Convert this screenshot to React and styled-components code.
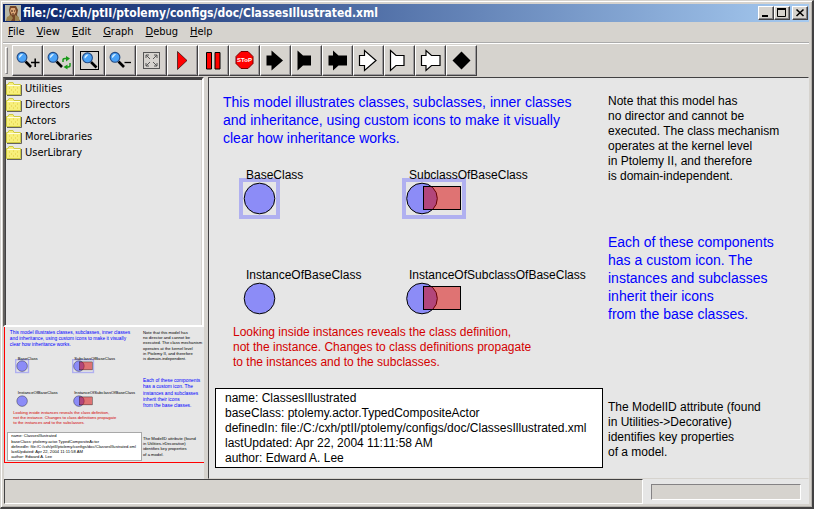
import React from "react";
import styled, { createGlobalStyle } from "styled-components";

const ui = '"DejaVu Sans Condensed", "DejaVu Sans", sans-serif';
const face = "#d6d3ce";
const pane = "#e6e6e6";

const GlobalStyle = createGlobalStyle`
  * { box-sizing: border-box; }
  body { margin: 0; background: ${face}; }
  button { font: inherit; color: inherit; padding: 0; margin: 0; }
  ul { list-style: none; margin: 0; padding: 0; }
`;

const Window = styled.div`
  min-height: 100vh;
  display: flex;
  flex-direction: column;
  background: ${face};
  border: solid;
  border-width: 1px 2px 2px 1px;
  border-color: ${face} #424142 #424142 ${face};
  box-shadow: inset 1px 1px 0 #fff, inset -1px -1px 0 #b5b2ad;
  padding: 3px 3px 3px 2px;
  font: 11px ${ui};
  color: #000;
`;

const TitleBar = styled.header`
  display: flex;
  align-items: center;
  height: 18px;
  flex: none;
  padding: 0 1px 0 2px;
  background: linear-gradient(90deg, #0a246a, #a6caf0);
`;

const Title = styled.h1`
  flex: 1;
  margin: 0 0 0 2px;
  color: #fff;
  font: bold 12px/18px ${ui};
  white-space: nowrap;
`;

const WindowButton = styled.button`
  width: 16px;
  height: 14px;
  margin-left: ${(p) => (p.$apart ? 2 : 0)}px;
  display: flex;
  background: ${face};
  border: 1px solid;
  border-color: #fff #424142 #424142 #fff;
  box-shadow: inset -1px -1px 0 #848284;
`;

const MenuBar = styled.nav`
  display: flex;
  gap: 12px;
  height: 22px;
  flex: none;
  padding: 0 5px;
  border-bottom: 2px groove #fff;
`;

const MenuItem = styled.button`
  border: 0;
  background: none;
  font: 11px/20px ${ui};
  &::first-letter { text-decoration: underline; }
`;

const ToolBar = styled.div`
  display: flex;
  align-items: flex-start;
  height: 33px;
  flex: none;
  padding: 1px 2px;
`;

const Grip = styled.span`
  width: 3px;
  height: 27px;
  margin: 2px 4px 0 0;
  border: 1px solid;
  border-color: #fff #848284 #848284 #fff;
`;

const ToolButton = styled.button`
  width: 31px;
  height: 31px;
  display: flex;
  background: ${face};
  border: 1px solid;
  border-color: #fff #424142 #424142 #fff;
  box-shadow: inset -1px -1px 0 #9c9a9c;
  svg { display: block; margin: -1px; overflow: visible; flex: none; }
`;

const Split = styled.main`
  flex: 1;
  display: grid;
  grid-template-columns: 201px 1fr;
  column-gap: 4px;
`;

const Side = styled.aside`
  display: grid;
  grid-template-rows: 250px 1fr;
  min-width: 0;
`;

const Tree = styled.ul`
  border: 2px solid;
  border-color: #424142 #fff #fff #63615f;
  box-shadow: inset 1px 1px 0 #424142, inset -1px 0 0 ${face};
  background: ${pane};
  && { padding: 2px 0 0 1px; }
`;

const Folder = styled.button`
  display: flex;
  align-items: center;
  gap: 3px;
  height: 16px;
  border: 0;
  background: none;
  font: 11px/16px ${ui};
`;

const Overview = styled.div`
  position: relative;
  overflow: hidden;
  background: ${pane};
  margin-left: 1px;
`;

const Graph = styled.section`
  position: relative;
  border: 1px solid;
  border-color: #424142 ${pane} ${face} #424142;
  background: ${pane};
  min-width: 0;
  overflow: hidden;
`;

const Note = styled.p`
  position: absolute;
  left: ${(p) => p.$x}px;
  top: ${(p) => p.$y}px;
  margin: 0;
  white-space: pre;
  color: ${(p) => p.$color || "#000"};
  font: ${(p) => (p.$large ? "14px/18px" : "12px/15px")} "Liberation Sans", Arial, sans-serif;
`;

const ModelId = styled(Note)`
  border: 1px solid #000;
  background: #fff;
  padding: 2px 15px 1px 9px;
`;

const Miniature = styled.div`
  position: absolute;
  left: 0;
  top: -10px;
  zoom: 0.346;
  width: 600px;
  height: 402px;
  border: 3px solid #f00;
  ${ModelId} { border-color: #a8a8a8; }
`;

const Actor = styled.svg`
  position: absolute;
  left: ${(p) => p.$x}px;
  top: ${(p) => p.$y}px;
  overflow: visible;
`;

const StatusBar = styled.footer`
  display: grid;
  grid-template-columns: 1fr 166px;
  flex: none;
  height: 25px;
  background: ${pane};
  margin-left: 1px;
`;

const StatusText = styled.div`
  background: ${face};
  border: 1px solid;
  border-color: #424142 #fff #fff #424142;
`;

const Progress = styled.div`
  align-self: center;
  height: 16px;
  margin: 0 8px;
  background: ${face};
  border: 1px solid;
  border-color: #848284 #fff #fff #848284;
`;

const Icon = ({ children }) => (
  <svg width="31" height="31" viewBox="0 0 31 31" aria-hidden="true">{children}</svg>
);

const Lens = () => (
  <g>
    <path d="M13.5 16.5l5.5 5.5" stroke="#000" strokeWidth="2.6" />
    <circle cx="10" cy="12.3" r="4.9" fill="#4aa2f7" stroke="#214a84" strokeWidth="1.1" />
    <path d="M7 12.5a3.2 3.2 0 0 1 4-3.4L7.6 13z" fill="#d6efff" />
  </g>
);

const solid = { fill: "#000" };
const hollow = { fill: "#fff", stroke: "#000", strokeWidth: 1.2 };
const right = "M6.5 10.5h5v-5l11.5 10-11.5 10v-5h-5z";
const inward = "M6.5 5.5l5.5 5h8v10h-8l-5.5 5z";
const both = "M6.5 10.5h4.5v-5l5.5 5h8.5v10h-8.5l-5.5 5v-5h-4.5z";

const tools = [
  ["Zoom in", <><Lens /><path d="M19 17.5h8.5M23.2 13.5v8.5" stroke="#000" strokeWidth="1.5" /></>],
  ["Reset zoom", <><Lens /><g stroke="#189a18" strokeWidth="1.5" fill="none"><path d="M20 17v-2q0-1.5 2-1.5h2M27 18v2.5q0 1.5-2 1.5h-2" /></g><path d="M23 11l4 2.5-4 3zM24.5 19.5v5l-4-2.5z" fill="#189a18" /></>],
  ["Fit", <><rect x="6.5" y="6.5" width="18" height="18" fill="none" stroke="#000" /><g transform="translate(3.5 .5)"><Lens /></g></>],
  ["Zoom out", <><Lens /><path d="M19.5 17.5h6.5" stroke="#000" strokeWidth="1.3" /></>],
  ["Full screen", <g fill="none" stroke="#555"><rect x="7.5" y="7.5" width="16" height="16" /><path d="M10 13v-3h3M18 10h3v3M10 18v3h3M21 18v3h-3M10 10l4 4M21 10l-4 4M10 21l4-4M21 21l-4-4" /></g>],
  ["Run", <path d="M10.5 6.5v18l9.5-9z" fill="#f00" stroke="#000" strokeWidth=".6" />],
  ["Pause", <path d="M8.5 7.5h5v16.5h-5zM17 7.5h5v16.5h-5z" fill="#f00" stroke="#000" />],
  ["Stop", <><path d="M12 6.5h7l5 5v7l-5 5h-7l-5-5v-7z" fill="#f00" stroke="#700" /><text x="15.5" y="17" textAnchor="middle" fontSize="6" fontWeight="bold" fontFamily="Liberation Sans, sans-serif" fill="#fff">SToP</text></>],
  ["Input port", <path d={right} {...solid} />],
  ["Output port", <path d={inward} {...solid} />],
  ["Input/output port", <path d={both} {...solid} />],
  ["Input multiport", <path d={right} {...hollow} />],
  ["Output multiport", <path d={inward} {...hollow} />],
  ["Input/output multiport", <path d={both} {...hollow} />],
  ["New relation", <path d="M15.5 6.5l9 9-9 9-9-9z" {...solid} />],
];

const FolderIcon = () => (
  <svg width="16" height="14" viewBox="0 0 16 14" aria-hidden="true">
    <path d="M1 13.5h14.5V3" fill="none" stroke="#63615f" />
    <path d="M.5 12.5v-10h1.5l1-2h4l1 2h6.5v10z" fill="#f7ef7b" stroke="#ceca42" />
    <path d="M1.5 3.5h12.5" stroke="#fffde0" />
    <path d="M3 6h1M7 5h1M11 6h1M5 8h1M9 8h1M3 10h1M7 10h1M11 10h1" stroke="#e0c840" />
  </svg>
);

const BaseShape = ({ x, y, framed }) => (
  <Actor $x={x} $y={y} width="40" height="40" aria-hidden="true">
    {framed && <rect x="2" y="2" width="37" height="37" fill="none" stroke="#b0b0f0" strokeWidth="4" />}
    <circle cx="20.5" cy="20.5" r="15.3" fill="#8c8cf7" stroke="#000" />
  </Actor>
);

const SubShape = ({ x, y, framed }) => (
  <Actor $x={x} $y={y} width="64" height="40" aria-hidden="true">
    {framed && <rect x="2" y="2" width="60" height="37" fill="none" stroke="#b0b0f0" strokeWidth="4" />}
    <circle cx="20" cy="20.5" r="15.3" fill="#8c8cf7" stroke="#000" />
    <rect x="21.5" y="8.5" width="37" height="23" fill="#d80000" fillOpacity=".5" stroke="#000" />
  </Actor>
);

const Scene = () => (
  <>
    <Note $large $x={14} $y={15} $color="#00f">{`This model illustrates classes, subclasses, inner classes
and inheritance, using custom icons to make it visually
clear how inheritance works.`}</Note>
    <Note $x={399} $y={16}>{`Note that this model has
no director and cannot be
executed. The class mechanism
operates at the kernel level
in Ptolemy II, and therefore
is domain-independent.`}</Note>
    <BaseShape x={30} y={100} framed />
    <SubShape x={193} y={100} framed />
    <BaseShape x={30} y={200} />
    <SubShape x={193} y={200} />
    <Note $x={37} $y={90}>BaseClass</Note>
    <Note $x={200} $y={90}>SubclassOfBaseClass</Note>
    <Note $x={37} $y={190}>InstanceOfBaseClass</Note>
    <Note $x={200} $y={190}>InstanceOfSubclassOfBaseClass</Note>
    <Note $large $x={399} $y={155} $color="#00f">{`Each of these components
has a custom icon. The
instances and subclasses
inherit their icons
from the base classes.`}</Note>
    <Note $x={24} $y={247} $color="#d40000">{`Looking inside instances reveals the class definition,
not the instance. Changes to class definitions propagate
to the instances and to the subclasses.`}</Note>
    <ModelId $x={6} $y={310}>{`name: ClassesIllustrated
baseClass: ptolemy.actor.TypedCompositeActor
definedIn: file:/C:/cxh/ptII/ptolemy/configs/doc/ClassesIllustrated.xml
lastUpdated: Apr 22, 2004 11:11:58 AM
author: Edward A. Lee`}</ModelId>
    <Note $x={399} $y={322}>{`The ModelID attribute (found
in Utilities->Decorative)
identifies key properties
of a model.`}</Note>
  </>
);

export default function App() {
  return (
    <Window>
      <GlobalStyle />
      <TitleBar>
        <svg width="16" height="16" viewBox="0 0 16 16" aria-hidden="true">
          <path d="M0 0h16v16H0z" fill="#b8b8a8" />
          <path d="M5 1h6l2 4-1 5 3 6H1l4-6-1-5z" fill="#754526" />
          <path d="M6 3h4l1 4-2 3H7L5 6z" fill="#dda878" />
          <path d="M2 12l4-2 2 3-2 3H1zM10 10l4 2v4h-4z" fill="#9c8350" />
          <path d="M6 6h2M9 6h1M7 9h2" stroke="#3b1d10" />
        </svg>
        <Title>file:/C:/cxh/ptII/ptolemy/configs/doc/ClassesIllustrated.xml</Title>
        <WindowButton aria-label="Minimize"><svg width="14" height="12"><path d="M3 9h6" stroke="#000" strokeWidth="2" /></svg></WindowButton>
        <WindowButton aria-label="Maximize"><svg width="14" height="12"><path d="M2.5 2v7.5h8V2" fill="none" stroke="#000" /><path d="M2 2h9" stroke="#000" strokeWidth="2" /></svg></WindowButton>
        <WindowButton $apart aria-label="Close"><svg width="14" height="12"><path d="M3.5 2.5l7 6.5M10.5 2.5l-7 6.5" stroke="#000" strokeWidth="1.6" /></svg></WindowButton>
      </TitleBar>
      <MenuBar>
        {["File", "View", "Edit", "Graph", "Debug", "Help"].map((m) => <MenuItem key={m}>{m}</MenuItem>)}
      </MenuBar>
      <ToolBar>
        <Grip />
        {tools.map(([name, art]) => (
          <ToolButton key={name} aria-label={name}><Icon>{art}</Icon></ToolButton>
        ))}
      </ToolBar>
      <Split>
        <Side>
          <Tree>
            {["Utilities", "Directors", "Actors", "MoreLibraries", "UserLibrary"].map((f) => (
              <li key={f}><Folder><FolderIcon />{f}</Folder></li>
            ))}
          </Tree>
          <Overview aria-hidden="true"><Miniature><Scene /></Miniature></Overview>
        </Side>
        <Graph><Scene /></Graph>
      </Split>
      <StatusBar>
        <StatusText />
        <Progress role="progressbar" aria-label="Progress" />
      </StatusBar>
    </Window>
  );
}
